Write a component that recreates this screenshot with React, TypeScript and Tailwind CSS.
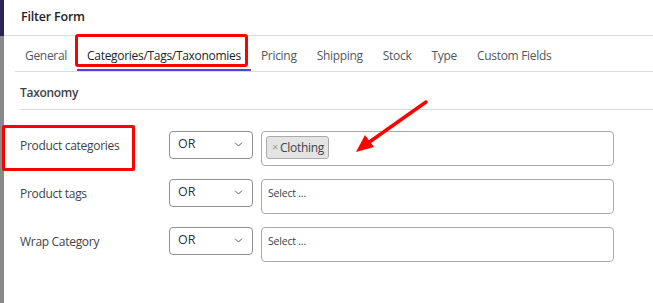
import { ChevronDown } from 'lucide-react';

const tabs = ['General', 'Categories/Tags/Taxonomies', 'Pricing', 'Shipping', 'Stock', 'Type', 'Custom Fields'];

const rows = [
  { label: 'Product categories', chips: ['Clothing'] },
  { label: 'Product tags', chips: [] as string[] },
  { label: 'Wrap Category', chips: [] as string[] },
];

function OrSelect() {
  return (
    <div className="flex h-[28px] w-[84px] shrink-0 items-start justify-between rounded-[4px] border border-[#8c8f94] bg-white pl-[8px] pr-[7px] pt-[3px]">
      <span className="text-[12.5px] leading-[18px] text-[#2c3338]">OR</span>
      <ChevronDown className="mt-[3px] h-[13px] w-[13px] text-[#50575e]" strokeWidth={1.75} />
    </div>
  );
}

function MultiSelect({ chips }: { chips: string[] }) {
  return (
    <div className="flex h-[35px] w-[353px] shrink-0 items-start rounded-[4px] border border-[#a7aaad] bg-white px-[4px] pt-[4px]">
      {chips.length > 0 ? (
        chips.map((c) => (
          <span
            key={c}
            className="flex h-[23px] items-center gap-[2px] rounded-[3px] border border-[#aaaaaa] bg-[#e4e4e4] pl-[5px] pr-[4px] text-[12px] tracking-[-0.3px] text-[#3c434a]"
          >
            <span className="text-[11px] text-[#999]">×</span>
            {c}
          </span>
        ))
      ) : (
        <span className="pl-[2px] pt-[1px] text-[10.5px] leading-[16px] tracking-[-0.2px] text-[#3c434a]">Select ...</span>
      )}
    </div>
  );
}

export default function App() {
  return (
    <div
      className="relative flex h-[303px] w-[653px] overflow-hidden bg-white"
      style={{ fontFamily: '"Open Sans", "Noto Sans", sans-serif' }}
    >
      {/* left edge of the page behind the modal */}
      <div className="flex w-[4px] shrink-0 flex-col">
        <div className="h-[36px] bg-[#2b2456]" />
        <div className="flex-1 bg-[#8a8a8a]" />
      </div>

      <div className="flex flex-1 flex-col">
        {/* Header */}
        <div className="flex h-[36px] items-center border-b border-[#dcdcde] pl-[17px] pb-[1px]">
          <span className="text-[12.5px] font-semibold tracking-[-0.2px] text-[#1d2327]">Filter Form</span>
        </div>

        {/* Tabs */}
        <div className="ml-[11px] flex h-[36px] border-b border-[#dcdcde]">
          {tabs.map((t, i) => (
            <div
              key={t}
              className={`relative flex items-center px-[10px] pt-[4px] text-[12px] tracking-[-0.3px] ${i === 1 ? 'text-[#1d2327]' : 'text-[#50575e]'}`}
            >
              {t}
              {i === 1 && <div className="absolute bottom-0 left-0 right-0 h-[2px] bg-[#5b3fd3]" />}
            </div>
          ))}
        </div>

        {/* Section */}
        <div className="ml-[15px] flex h-[38px] items-center border-b border-[#dcdcde] pl-[1px] pt-[5px]">
          <span className="text-[12px] font-semibold tracking-[-0.3px] text-[#3c434a]">Taxonomy</span>
        </div>

        <div className="flex flex-col gap-[13px] pl-[16px] pt-[21px]">
          {rows.map((r) => (
            <div key={r.label} className="flex items-start">
              <span className="w-[149px] shrink-0 pt-[5px] text-[12px] leading-[20px] tracking-[-0.3px] text-[#3c434a]">{r.label}</span>
              <OrSelect />
              <div className="w-[8px]" />
              <MultiSelect chips={r.chips} />
            </div>
          ))}
        </div>
      </div>

      {/* Annotations */}
      <div className="pointer-events-none absolute left-[75px] top-[34px] h-[33px] w-[173px] rounded-[3px] border-[3px] border-[#ff0000]" />
      <div className="pointer-events-none absolute left-[2px] top-[125px] h-[46px] w-[133px] rounded-[2px] border-[3px] border-[#ff0000]" />
      <svg className="pointer-events-none absolute left-0 top-0" width="653" height="303">
        <line x1="426" y1="102" x2="368" y2="143" stroke="#ff0000" strokeWidth="3.5" strokeLinecap="round" />
        <polygon points="356,152 365,135 374,147" fill="#ff0000" />
      </svg>
    </div>
  );
}
